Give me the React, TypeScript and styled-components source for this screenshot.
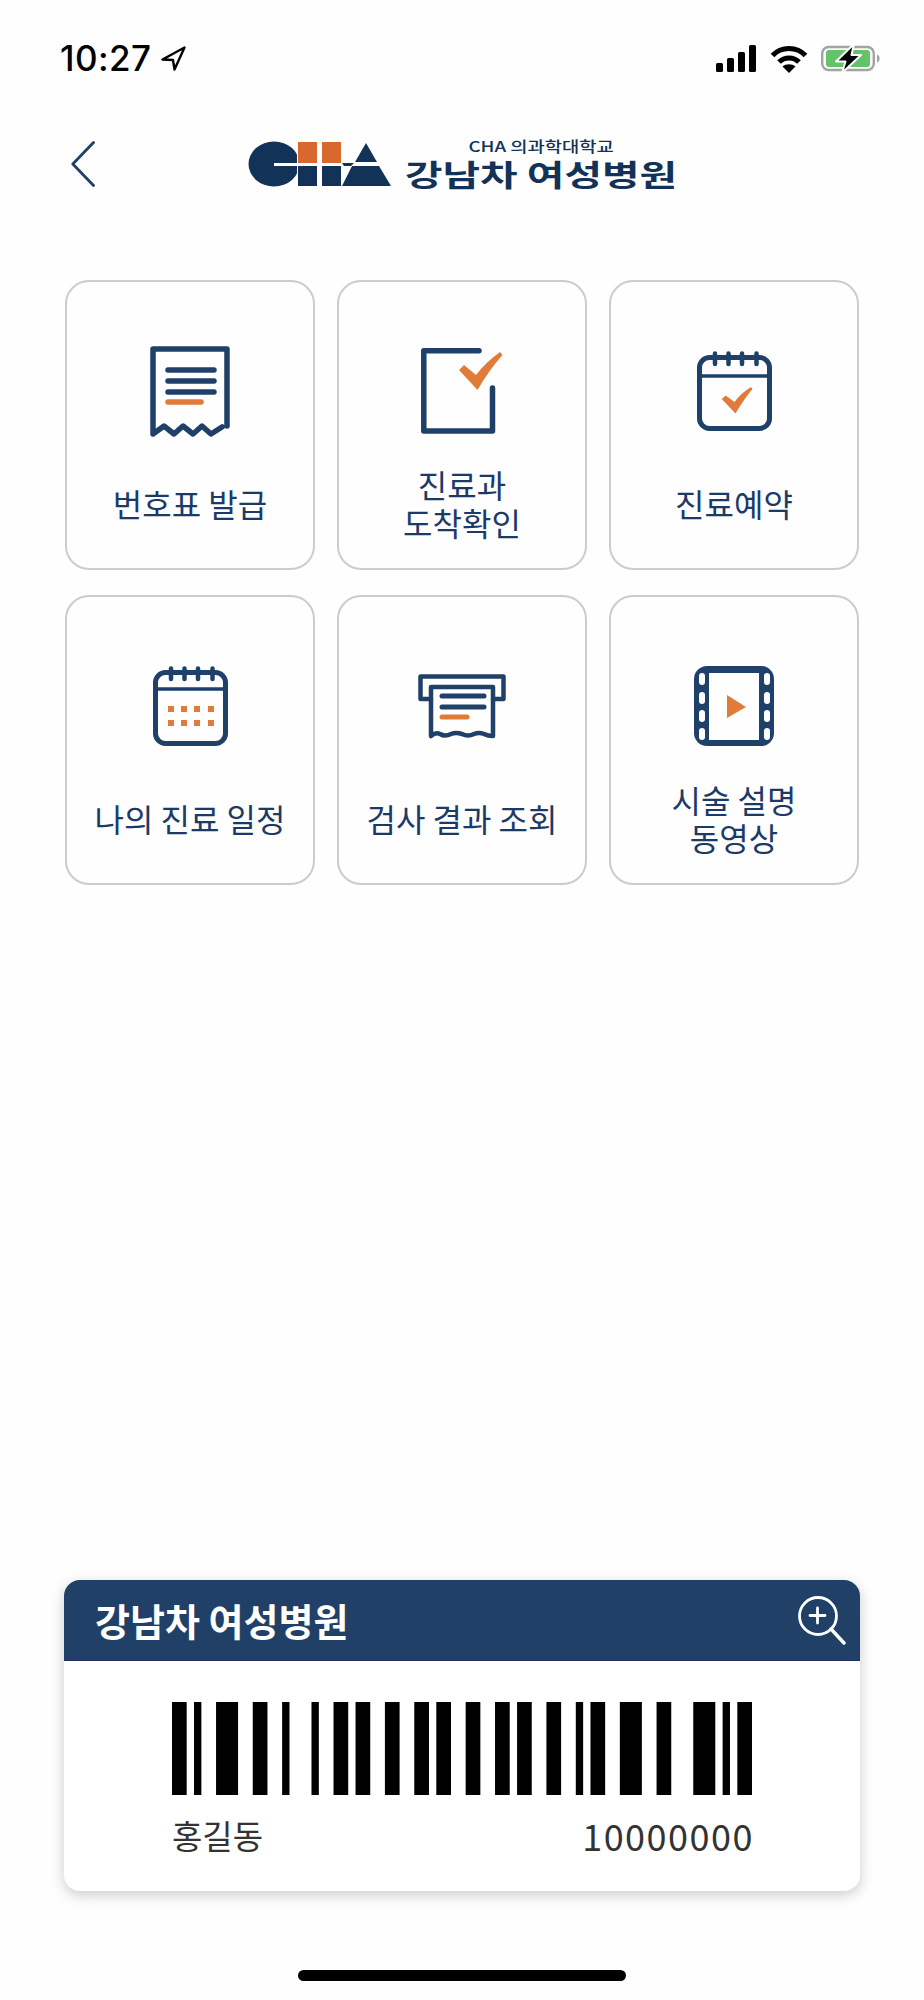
import React from 'react';
import styled, { createGlobalStyle } from 'styled-components';

const NAVY = '#1f4068';
const ORANGE = '#e07b39';
const LOGO_NAVY = '#123257';
const KR_FONT = '"Noto Sans CJK KR", "Noto Sans", sans-serif';

const GlobalStyle = createGlobalStyle`
  html, body {
    margin: 0;
    padding: 0;
    background: #fefefe;
  }
`;

const Page = styled.div`
  width: 924px;
  height: 2000px;
  display: flex;
  flex-direction: column;
  background: #fefefe;
  font-family: ${KR_FONT};
  overflow: hidden;
`;

const StatusBar = styled.div`
  height: 29px;
  margin-top: 44px;
  padding: 0 43px 0 60px;
  display: flex;
  align-items: center;
  justify-content: space-between;
`;

const Clock = styled.div`
  display: flex;
  align-items: center;
  gap: 10px;
  font-family: Inter, sans-serif;
  font-size: 35px;
  font-weight: 500;
  letter-spacing: 0.4px;
  line-height: 29px;
  color: #000;
`;

const StatusIcons = styled.div`
  display: flex;
  align-items: center;
  gap: 13px;
`;

const Header = styled.header`
  height: 48px;
  margin-top: 67px;
  padding-left: 71px;
  display: flex;
  align-items: center;
  gap: 153px;
`;

const Logo = styled.div`
  display: flex;
  align-items: center;
  gap: 16px;
`;

const LogoText = styled.div`
  width: 268px;
  display: flex;
  flex-direction: column;
  align-items: center;
  color: ${LOGO_NAVY};
`;

const LogoSmall = styled.span`
  font-size: 15px;
  line-height: 17px;
  font-weight: 500;
  white-space: nowrap;
  transform: translateY(-3px) scaleX(1.25);
`;

const LogoMain = styled.span`
  font-size: 30px;
  line-height: 31px;
  font-weight: 700;
  white-space: nowrap;
  transform: translateY(1px) scaleX(1.36);
`;

const MenuGrid = styled.div`
  margin: 92px 65px 0;
  display: grid;
  grid-template-columns: repeat(3, 250px);
  grid-auto-rows: 290px;
  column-gap: 22px;
  row-gap: 25px;
`;

const MenuCard = styled.button`
  box-sizing: border-box;
  padding: 63px 0 0;
  display: flex;
  flex-direction: column;
  align-items: center;
  background: #fefefe;
  border: 2px solid #cccccc;
  border-radius: 24px;
  font-family: inherit;
`;

const IconSlot = styled.div`
  height: 92px;
  display: flex;
  align-items: center;
  justify-content: center;
`;

const MenuLabel = styled.div`
  height: 76px;
  margin-top: 28px;
  display: flex;
  align-items: center;
  justify-content: center;
  text-align: center;
  font-size: 32px;
  line-height: 38px;
  color: #1c3a68;
`;

const IdCard = styled.section`
  margin: auto 64px 0;
  height: 311px;
  display: flex;
  flex-direction: column;
  background: #ffffff;
  border-radius: 16px;
  box-shadow: 0 4px 14px rgba(0, 0, 0, 0.2);
  overflow: hidden;
`;

const IdCardHeader = styled.div`
  height: 81px;
  padding: 0 13px 0 31px;
  display: flex;
  align-items: center;
  justify-content: space-between;
  background: #204068;
  border-bottom: 1px solid #1c2f66;
  box-sizing: border-box;
`;

const IdCardTitle = styled.h2`
  margin: 0;
  font-size: 38px;
  font-weight: 700;
  line-height: 50px;
  color: #ffffff;
`;

const IdCardBody = styled.div`
  padding: 41px 108px 0;
  display: flex;
  flex-direction: column;
`;

const Barcode = styled.svg`
  display: block;
  width: 580px;
  height: 93px;
`;

const IdCardInfo = styled.div`
  margin-top: 18px;
  display: flex;
  align-items: center;
  justify-content: space-between;
  font-size: 33px;
  line-height: 44px;
  color: #333333;
`;

const IdNumber = styled.span`
  font-size: 36px;
  letter-spacing: 1.5px;
  margin-right: -2px;
`;

const HomeBar = styled.div`
  align-self: center;
  width: 328px;
  height: 11px;
  margin: 79px 0 19px;
  background: #000;
  border-radius: 6px;
`;

const ReceiptIcon = () => (
  <svg width="80" height="91" viewBox="0 0 80 91" fill="none" strokeLinecap="round" strokeLinejoin="round">
    <path
      d="M77 80V3H3V88L14 80L24 88L33 80L43 88L52 80L61 88L72 81"
      stroke={NAVY}
      strokeWidth="5.5"
    />
    <path d="M18 24H64M18 35H64M18 46H64" stroke={NAVY} strokeWidth="5.5" />
    <path d="M18 56H51" stroke={ORANGE} strokeWidth="5.5" />
  </svg>
);

const CheckBoxIcon = () => (
  <svg width="82" height="86" viewBox="0 0 82 86" fill="none" strokeLinecap="round" strokeLinejoin="round">
    <path d="M58 2.8H2.8V83H71.5V40" stroke={NAVY} strokeWidth="5.5" />
    <path d="M38 22L43 17L55 27Q65 14 79 4L81.5 7Q68 22 56.5 42Z" fill={ORANGE} />
  </svg>
);

const CalendarFrame = ({ dividerY, children }: { dividerY: number; children: React.ReactNode }) => (
  <svg width="75" height="80" viewBox="0 0 75 80" fill="none" strokeLinecap="round">
    <rect x="2.5" y="6.5" width="70" height="71" rx="10" stroke={NAVY} strokeWidth="5" />
    <path d="M18 2.5V13M31.5 2.5V13M45 2.5V13M59.5 2.5V13" stroke={NAVY} strokeWidth="4.5" />
    <path d={`M2.5 ${dividerY}H72.5`} stroke={NAVY} strokeWidth="3.5" />
    {children}
  </svg>
);

const CalendarCheckIcon = () => (
  <CalendarFrame dividerY={25}>
    <path d="M24.7 48L28.7 44.5L37.5 51Q44 42 54 36L55.5 38Q47 48 38.5 62.5Z" fill={ORANGE} />
  </CalendarFrame>
);

const dotColumns = [15, 28, 41, 55];
const dotRows = [40, 54];

const CalendarDotsIcon = () => (
  <CalendarFrame dividerY={23}>
    {dotRows.map((y) =>
      dotColumns.map((x) => <rect key={`${x}-${y}`} x={x} y={y} width="6" height="6" fill={ORANGE} />),
    )}
  </CalendarFrame>
);

const PrinterIcon = () => (
  <svg width="88" height="65" viewBox="0 0 88 65" fill="none" strokeLinecap="round" strokeLinejoin="round">
    <path d="M13 25H2.5V2.5H85.5V25H75" stroke={NAVY} strokeWidth="4.5" />
    <path
      d="M13 13H75V62Q70 62 66 60Q61 58 56 60Q50 63 44 60Q38 58 33 60Q27 63 22 60Q18 58 13 62Z"
      stroke={NAVY}
      strokeWidth="4.5"
    />
    <path d="M24 22H66M24 33H66" stroke={NAVY} strokeWidth="5" />
    <path d="M24 43H49" stroke={ORANGE} strokeWidth="5" />
  </svg>
);

const filmHoles = [7, 26, 44, 62];

const FilmIcon = () => (
  <svg width="80" height="80" viewBox="0 0 80 80">
    <rect width="80" height="80" rx="13" fill={NAVY} />
    <rect x="15" y="7" width="50" height="67" fill="#fefefe" />
    {filmHoles.map((y) => (
      <React.Fragment key={y}>
        <rect x="5" y={y} width="6" height="12" rx="3" fill="#fefefe" />
        <rect x="70" y={y} width="6" height="12" rx="3" fill="#fefefe" />
      </React.Fragment>
    ))}
    <path d="M33 29L52 41L33 52Z" fill={ORANGE} />
  </svg>
);

const menuItems: { label: string[]; icon: React.ReactNode }[] = [
  { label: ['번호표 발급'], icon: <ReceiptIcon /> },
  { label: ['진료과', '도착확인'], icon: <CheckBoxIcon /> },
  { label: ['진료예약'], icon: <CalendarCheckIcon /> },
  { label: ['나의 진료 일정'], icon: <CalendarDotsIcon /> },
  { label: ['검사 결과 조회'], icon: <PrinterIcon /> },
  { label: ['시술 설명', '동영상'], icon: <FilmIcon /> },
];

// bar, gap, bar, gap... widths in modules, read off the picture
const barcodeModules = [
  2, 1, 1, 2, 3, 2, 2, 2, 1, 3, 1, 2, 2, 1, 2, 2, 2, 2, 2, 1, 2, 2, 2, 2, 2, 1, 2, 2, 2, 2, 1, 1, 2, 2, 3, 2, 2, 3, 3,
  1, 1, 1, 2,
];

const barcodeBars = barcodeModules.reduce<{ x: number; w: number; on: boolean }[]>((list, w, i) => {
  const last = list[list.length - 1];
  list.push({ x: last ? last.x + last.w : 0, w, on: i % 2 === 0 });
  return list;
}, []);

const App: React.FC = () => {
  return (
    <Page>
      <GlobalStyle />
      <StatusBar>
        <Clock>
          10:27
          <svg width="25" height="25" viewBox="0 0 25 25" fill="none">
            <path d="M23.5 1.5L1.5 13.5L12 14L13.5 23.5Z" stroke="#000" strokeWidth="2.4" strokeLinejoin="round" />
          </svg>
        </Clock>
        <StatusIcons>
          <svg width="41" height="28" viewBox="0 0 41 28" fill="#000">
            <rect x="0" y="18" width="7" height="9" rx="1.5" />
            <rect x="11" y="13" width="7" height="14" rx="1.5" />
            <rect x="22" y="7" width="7" height="20" rx="1.5" />
            <rect x="33" y="0" width="7" height="27" rx="1.5" />
          </svg>
          <svg width="38" height="28" viewBox="0 0 38 28" fill="none" stroke="#000" strokeWidth="5">
            <path d="M2.5 10.5C11 1 27 1 35.5 10.5" />
            <path d="M9 17C14.5 11.5 23.5 11.5 29 17" />
            <path d="M19 28L12.5 21.5C16 18.5 22 18.5 25.5 21.5Z" fill="#000" stroke="none" />
          </svg>
          <svg width="60" height="31" viewBox="0 0 60 31">
            <rect x="1.2" y="4" width="51.6" height="23" rx="6.5" fill="none" stroke="#a3a3a3" strokeWidth="2.4" />
            <rect x="5" y="7" width="44" height="17" rx="3" fill="#62c466" />
            <path d="M56 11.5C59.5 12.5 59.5 18.5 56 19.5Z" fill="#a3a3a3" />
            <path
              d="M33 1L15 18.5H24.5L21 30L40 12H30.5Z"
              fill="#000"
              stroke="#fefefe"
              strokeWidth="2"
              strokeLinejoin="round"
            />
          </svg>
        </StatusIcons>
      </StatusBar>

      <Header>
        <svg width="24" height="46" viewBox="0 0 24 46" fill="none">
          <path d="M22.5 1.5L1.8 23L22.5 44.5" stroke={NAVY} strokeWidth="2.8" strokeLinecap="round" strokeLinejoin="round" />
        </svg>
        <Logo>
          <svg width="143" height="46" viewBox="0 0 143 46">
            <ellipse cx="26" cy="23" rx="25.5" ry="22.5" fill={LOGO_NAVY} />
            <rect x="26" y="22" width="110" height="3" fill="#fefefe" />
            <rect x="49" y="0" width="2" height="46" fill="#fefefe" />
            <rect x="50" y="1" width="19" height="21" fill="#d9682f" />
            <rect x="74" y="1" width="19" height="21" fill="#d9682f" />
            <rect x="50" y="25" width="19" height="20" fill={LOGO_NAVY} />
            <rect x="74" y="25" width="19" height="20" fill={LOGO_NAVY} />
            <path d="M118 2L129 21H107Z" fill={LOGO_NAVY} />
            <path d="M94 22H106L103 25H96Z" fill={LOGO_NAVY} />
            <path d="M104 25H131L143 45H94Z" fill={LOGO_NAVY} />
          </svg>
          <LogoText>
            <LogoSmall>CHA 의과학대학교</LogoSmall>
            <LogoMain>강남차 여성병원</LogoMain>
          </LogoText>
        </Logo>
      </Header>

      <MenuGrid>
        {menuItems.map((item) => (
          <MenuCard key={item.label.join(' ')}>
            <IconSlot>{item.icon}</IconSlot>
            <MenuLabel>
              <div>
                {item.label.map((line) => (
                  <div key={line}>{line}</div>
                ))}
              </div>
            </MenuLabel>
          </MenuCard>
        ))}
      </MenuGrid>

      <IdCard>
        <IdCardHeader>
          <IdCardTitle>강남차 여성병원</IdCardTitle>
          <svg width="50" height="50" viewBox="0 0 50 50" fill="none" stroke="#fff" strokeLinecap="round">
            <circle cx="21" cy="21" r="18.5" strokeWidth="2.8" />
            <path d="M13 20.5H28M20.5 13V28" strokeWidth="2.8" />
            <path d="M34 34L47 48" strokeWidth="3.4" />
          </svg>
        </IdCardHeader>
        <IdCardBody>
          <Barcode viewBox="0 0 79 10" preserveAspectRatio="none">
            {barcodeBars
              .filter((bar) => bar.on)
              .map((bar) => (
                <rect key={bar.x} x={bar.x} y="0" width={bar.w} height="10" fill="#000" />
              ))}
          </Barcode>
          <IdCardInfo>
            <span>홍길동</span>
            <IdNumber>10000000</IdNumber>
          </IdCardInfo>
        </IdCardBody>
      </IdCard>

      <HomeBar />
    </Page>
  );
};

export default App;
